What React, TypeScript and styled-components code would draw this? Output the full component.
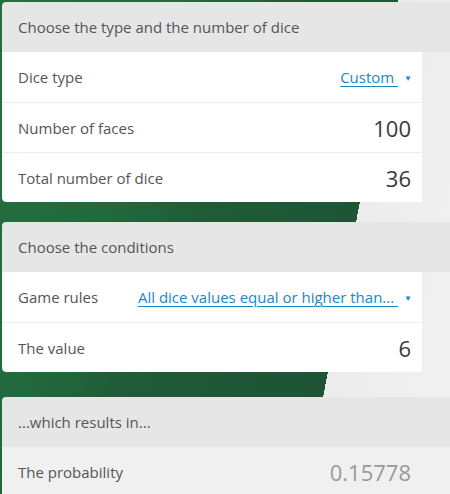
import React from "react";
import styled, { createGlobalStyle } from "styled-components";

const GlobalStyle = createGlobalStyle`
  html, body {
    margin: 0;
    padding: 0;
    overflow: hidden;
  }
  body {
    font-family: "Open Sans", "Noto Sans", sans-serif;
    color: #555;
  }
`;

const Page = styled.div`
  box-sizing: border-box;
  height: 494px;
  overflow: hidden;
  padding: 2px 0 0 2px;
  display: flex;
  flex-direction: column;
  background:
    linear-gradient(100.66deg, transparent 0 391px, #ececec 391px, #f2f2f2 100%),
    linear-gradient(115deg, #246f40 0%, #226a3d 30%, #1f5b37 45%, #1e5534 70%, #1d5032 100%);
`;

const Card = styled.section<{ $gap?: number }>`
  flex-shrink: 0;
  margin-top: ${(p) => p.$gap ?? 0}px;
  border-radius: 4px 0 0 4px;
  overflow: hidden;
  display: flex;
  flex-direction: column;
`;

const Header = styled.div`
  height: 50px;
  flex-shrink: 0;
  display: flex;
  align-items: center;
  padding-left: 16px;
  background: #e6e6e6;
  font-size: 15px;
  color: #555;
`;

const Body = styled.div<{ $muted?: boolean }>`
  width: ${(p) => (p.$muted ? "auto" : "420px")};
  background: ${(p) => (p.$muted ? "#f0f0f0" : "#fff")};
  border-radius: 0 0 0 4px;
`;

const Row = styled.div`
  box-sizing: border-box;
  width: 420px;
  height: 50px;
  display: flex;
  align-items: center;
  justify-content: space-between;
  padding: 0 10px 0 16px;
  & + & {
    border-top: 1px solid #ececec;
  }
`;

const Label = styled.span`
  font-size: 15px;
  color: #555;
`;

const Value = styled.span<{ $muted?: boolean }>`
  font-size: 22px;
  color: ${(p) => (p.$muted ? "#999" : "#3a3a3a")};
  padding-right: 1px;
`;

const Select = styled.a`
  font-size: 15px;
  color: #1a88c4;
  text-decoration: underline;
  text-underline-offset: 3px;
  cursor: pointer;
  white-space: nowrap;
`;

const Caret = styled.span`
  display: inline-block;
  font-size: 8px;
  margin-left: 6px;
  vertical-align: 2px;
`;

export default function App() {
  return (
    <>
      <GlobalStyle />
      <Page>
        <Card>
          <Header>Choose the type and the number of dice</Header>
          <Body>
            <Row>
              <Label>Dice type</Label>
              <Select>
                Custom <Caret>▼</Caret>
              </Select>
            </Row>
            <Row>
              <Label>Number of faces</Label>
              <Value>100</Value>
            </Row>
            <Row>
              <Label>Total number of dice</Label>
              <Value>36</Value>
            </Row>
          </Body>
        </Card>

        <Card $gap={20}>
          <Header>Choose the conditions</Header>
          <Body>
            <Row>
              <Label>Game rules</Label>
              <Select>
                All dice values equal or higher than... <Caret>▼</Caret>
              </Select>
            </Row>
            <Row>
              <Label>The value</Label>
              <Value>6</Value>
            </Row>
          </Body>
        </Card>

        <Card $gap={25}>
          <Header>...which results in...</Header>
          <Body $muted>
            <Row>
              <Label>The probability</Label>
              <Value $muted>0.15778</Value>
            </Row>
          </Body>
        </Card>
      </Page>
    </>
  );
}
